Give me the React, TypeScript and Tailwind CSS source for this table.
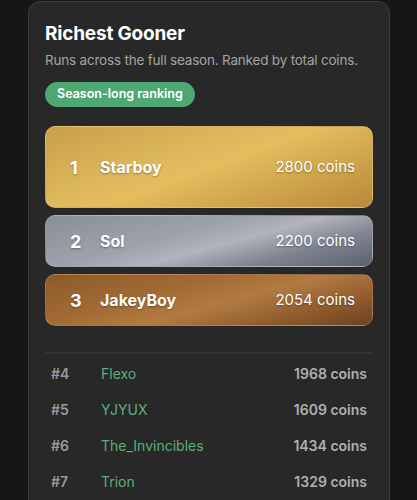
import React from "react";

const podium = [
  {
    rank: 1,
    name: "Starboy",
    coins: 2800,
    h: "h-[82px]",
    bg: "bg-[linear-gradient(160deg,#c79f4a_0%,#dcb65a_35%,#e3bd5e_50%,#d2a84e_70%,#b8893a_100%)]",
  },
  {
    rank: 2,
    name: "Sol",
    coins: 2200,
    h: "h-[52px]",
    bg: "bg-[linear-gradient(165deg,#8a8e99_0%,#9ea2ac_40%,#b1b4bd_55%,#7f8490_75%,#5c626d_100%)]",
  },
  {
    rank: 3,
    name: "JakeyBoy",
    coins: 2054,
    h: "h-[52px]",
    bg: "bg-[linear-gradient(165deg,#8c5a2b_0%,#a26b35_35%,#b17b42_55%,#8e5a2c_80%,#6b4220_100%)]",
  },
];

const rest = [
  { rank: 4, name: "Flexo", coins: 1968 },
  { rank: 5, name: "YJYUX", coins: 1609 },
  { rank: 6, name: "The_Invincibles", coins: 1434 },
  { rank: 7, name: "Trion", coins: 1329 },
];

export default function App() {
  return (
    <div className="w-[417px] h-[500px] overflow-hidden bg-[#151715] pt-px font-['Inter','Liberation_Sans',sans-serif]">
      <div className="ml-[28px] w-[362px] h-[520px] rounded-[12px] border border-[#3a3a3a] bg-[#282828] px-[16px] pt-[20px]">
        <h1 className="text-[19px] leading-[24px] font-bold text-white tracking-[-0.2px]">Richest Gooner</h1>
        <p className="mt-[4px] whitespace-nowrap text-[13.5px] leading-[20px] tracking-[-0.2px] text-[#a3a3a3]">
          Runs across the full season. Ranked by total coins.
        </p>
        <span className="mt-[12px] inline-flex h-[25px] items-center rounded-full bg-[#4fa874] px-[12px] text-[12.5px] font-semibold text-white">
          Season-long ranking
        </span>

        {/* Top three */}
        <div className="mt-[19px] flex flex-col gap-[7px]">
          {podium.map((p) => (
            <div
              key={p.rank}
              className={`${p.h} ${p.bg} flex items-center rounded-[10px] border border-white/15 pl-[24px] pr-[17px] text-white [text-shadow:0_1px_2px_rgba(0,0,0,0.35)]`}
            >
              <span className="w-[30px] text-[18px] font-bold">{p.rank}</span>
              <span className="flex-1 text-[16px] font-bold">{p.name}</span>
              <span className="text-[15px]">{p.coins} coins</span>
            </div>
          ))}
        </div>

        <div className="mt-[26px] h-[2px] bg-[#333333]" />

        {/* Everyone else */}
        <div className="mt-[1px] flex flex-col">
          {rest.map((r) => (
            <div key={r.rank} className="flex h-[36px] items-center pl-[6px] pr-[6px] text-[14px]">
              <span className="w-[50px] font-semibold text-[#9a9a9a]">#{r.rank}</span>
              <span className="flex-1 text-[#5fae7e]">{r.name}</span>
              <span className="font-semibold text-[#b0b0b0]">{r.coins} coins</span>
            </div>
          ))}
        </div>
      </div>
    </div>
  );
}
